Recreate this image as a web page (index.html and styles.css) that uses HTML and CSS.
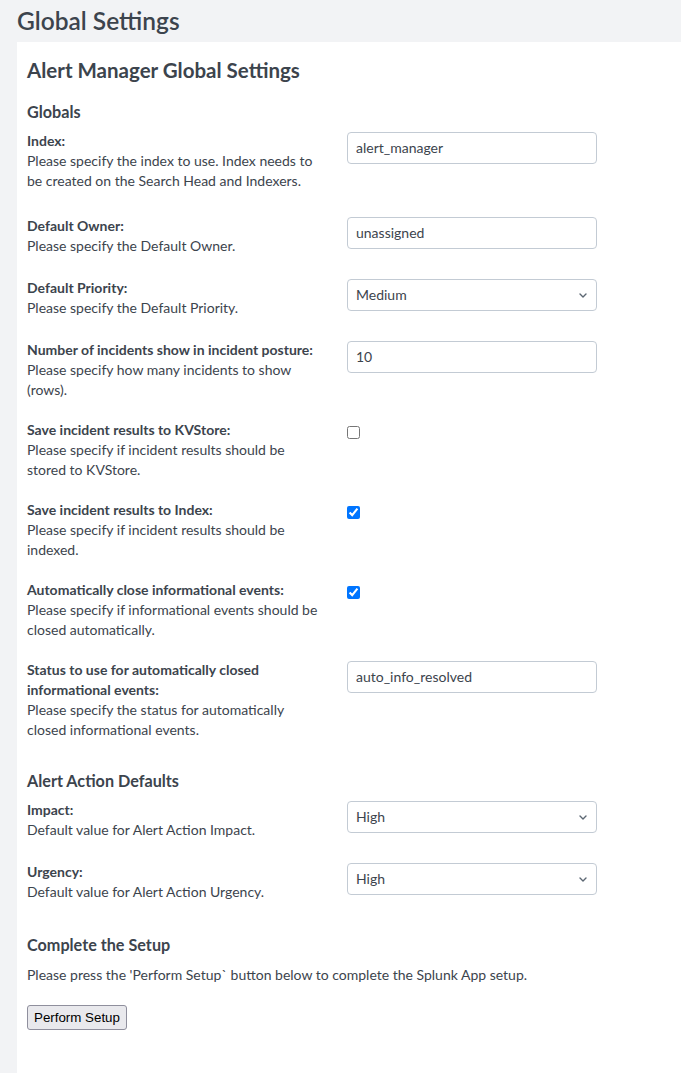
FILE: index.html
```html
<!DOCTYPE html>
<html lang="en">
<head>
<meta charset="utf-8">
<title>Global Settings</title>
<link rel="stylesheet" href="styles.css">
</head>
<body>
<header class="page-title">Global Settings</header>
<main class="panel">
  <h2 class="panel-title">Alert Manager Global Settings</h2>

  <h3 class="section-title">Globals</h3>

  <div class="row row-spaced">
    <div class="label-col">
      <div class="label">Index:</div>
      <div class="desc">Please specify the index to use. Index needs to<br>be created on the Search Head and Indexers.</div>
    </div>
    <div class="control-col"><input class="text-input" type="text" value="alert_manager"></div>
  </div>

  <div class="row">
    <div class="label-col">
      <div class="label">Default Owner:</div>
      <div class="desc">Please specify the Default Owner.</div>
    </div>
    <div class="control-col"><input class="text-input" type="text" value="unassigned"></div>
  </div>

  <div class="row">
    <div class="label-col">
      <div class="label">Default Priority:</div>
      <div class="desc">Please specify the Default Priority.</div>
    </div>
    <div class="control-col">
      <span class="select-wrap">
        <select class="select-input"><option>Medium</option></select>
        <svg class="chevron" width="8" height="5" viewBox="0 0 8 5"><path d="M1 1l3 3 3-3" fill="none" stroke="#5c6773" stroke-width="1.4" stroke-linecap="round" stroke-linejoin="round"/></svg>
      </span>
    </div>
  </div>

  <div class="row">
    <div class="label-col">
      <div class="label">Number of incidents show in incident posture:</div>
      <div class="desc">Please specify how many incidents to show<br>(rows).</div>
    </div>
    <div class="control-col"><input class="text-input" type="text" value="10"></div>
  </div>

  <div class="row">
    <div class="label-col">
      <div class="label">Save incident results to KVStore:</div>
      <div class="desc">Please specify if incident results should be<br>stored to KVStore.</div>
    </div>
    <div class="control-col"><input class="check" type="checkbox"></div>
  </div>

  <div class="row">
    <div class="label-col">
      <div class="label">Save incident results to Index:</div>
      <div class="desc">Please specify if incident results should be<br>indexed.</div>
    </div>
    <div class="control-col"><input class="check" type="checkbox" checked></div>
  </div>

  <div class="row">
    <div class="label-col">
      <div class="label">Automatically close informational events:</div>
      <div class="desc">Please specify if informational events should be<br>closed automatically.</div>
    </div>
    <div class="control-col"><input class="check" type="checkbox" checked></div>
  </div>

  <div class="row">
    <div class="label-col">
      <div class="label">Status to use for automatically closed<br>informational events:</div>
      <div class="desc">Please specify the status for automatically<br>closed informational events.</div>
    </div>
    <div class="control-col"><input class="text-input" type="text" value="auto_info_resolved"></div>
  </div>

  <h3 class="section-title">Alert Action Defaults</h3>

  <div class="row">
    <div class="label-col">
      <div class="label">Impact:</div>
      <div class="desc">Default value for Alert Action Impact.</div>
    </div>
    <div class="control-col">
      <span class="select-wrap">
        <select class="select-input"><option>High</option></select>
        <svg class="chevron" width="8" height="5" viewBox="0 0 8 5"><path d="M1 1l3 3 3-3" fill="none" stroke="#5c6773" stroke-width="1.4" stroke-linecap="round" stroke-linejoin="round"/></svg>
      </span>
    </div>
  </div>

  <div class="row">
    <div class="label-col">
      <div class="label">Urgency:</div>
      <div class="desc">Default value for Alert Action Urgency.</div>
    </div>
    <div class="control-col">
      <span class="select-wrap">
        <select class="select-input"><option>High</option></select>
        <svg class="chevron" width="8" height="5" viewBox="0 0 8 5"><path d="M1 1l3 3 3-3" fill="none" stroke="#5c6773" stroke-width="1.4" stroke-linecap="round" stroke-linejoin="round"/></svg>
      </span>
    </div>
  </div>

  <h3 class="section-title">Complete the Setup</h3>
  <p class="note">Please press the 'Perform Setup` button below to complete the Splunk App setup.</p>
  <div><button class="setup-btn" type="button">Perform Setup</button></div>
</main>
</body>
</html>
```
FILE: styles.css
```css
html, body {
  margin: 0;
  padding: 0;
}
body {
  background: #f2f3f5;
  color: #3c444d;
  font-family: Lato, "Open Sans", sans-serif;
  font-size: 14px;
  line-height: 20px;
}
.page-title {
  height: 42px;
  line-height: 41px;
  padding-left: 17px;
  font-size: 24.5px;
  font-weight: 600;
  color: #3c444d;
}
.panel {
  display: flex;
  flex-direction: column;
  align-items: flex-start;
  margin-left: 17px;
  background: #ffffff;
  min-height: calc(100vh - 42px);
  box-sizing: border-box;
  padding: 16px 10px 20px;
}
.panel-title {
  margin: 0 0 10px;
  font-size: 20.5px;
  line-height: 24px;
  font-weight: 700;
}
.section-title {
  margin: 9px 0 10px;
  font-size: 16.2px;
  line-height: 21px;
  font-weight: 700;
}
.row {
  display: flex;
  gap: 20px;
  margin-bottom: 20px;
}
.row-spaced {
  margin-bottom: 25px;
}
.label-col {
  width: 300px;
  flex: none;
  margin-top: -1px;
  margin-bottom: 1px;
}
.label {
  font-weight: 700;
}
.control-col {
  width: 250px;
}
.text-input,
.select-input {
  display: block;
  box-sizing: border-box;
  width: 250px;
  height: 32px;
  margin: 0 0 10px;
  padding: 0 8px 1px;
  border: 1px solid #c3cbd4;
  border-radius: 4px;
  background: #fff;
  color: #3c444d;
  font-family: inherit;
  font-size: 14px;
}
.select-input {
  appearance: none;
  -webkit-appearance: none;
}
.select-wrap {
  position: relative;
  display: block;
}
.chevron {
  position: absolute;
  right: 10px;
  top: 14px;
  pointer-events: none;
}
.check {
  display: block;
  width: 13px;
  height: 13px;
  margin: 5px 0 0;
}
.note {
  margin: 0 0 20px;
}
.setup-btn {
  font-family: "Liberation Sans", Arial, sans-serif;
  font-size: 13.33px;
  color: #000;
  background: #e9e9ed;
  border: 1px solid #8f8f9d;
  border-radius: 3px;
  padding: 4px 6px;
}
```
